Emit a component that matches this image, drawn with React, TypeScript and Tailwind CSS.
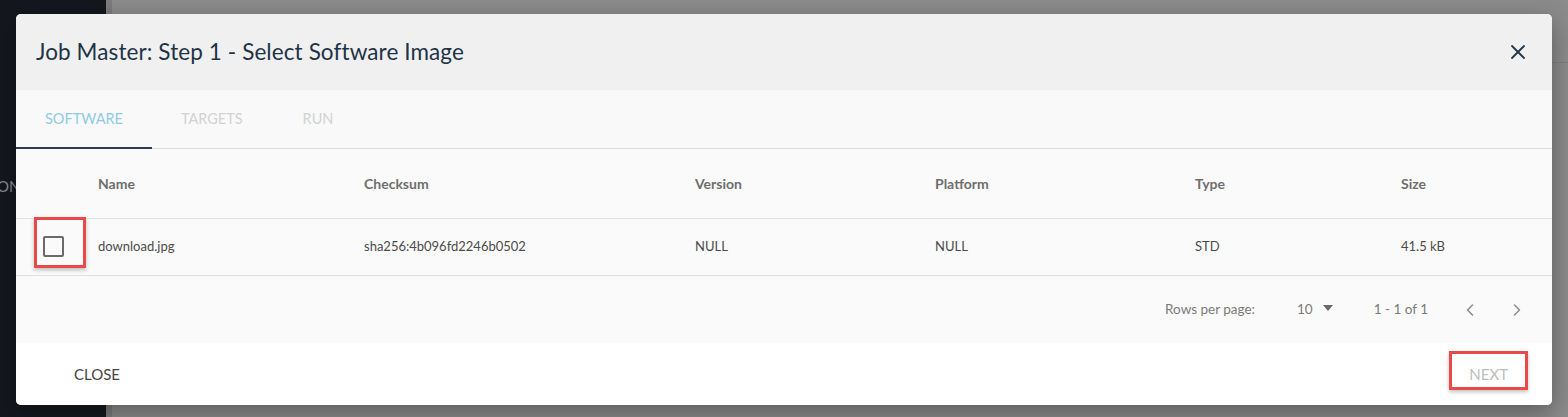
import { X, ChevronLeft, ChevronRight } from "lucide-react";

const columns = [
  { key: "name", label: "Name" },
  { key: "checksum", label: "Checksum" },
  { key: "version", label: "Version" },
  { key: "platform", label: "Platform" },
  { key: "type", label: "Type" },
  { key: "size", label: "Size" },
];

const rows = [
  {
    name: "download.jpg",
    checksum: "sha256:4b096fd2246b0502",
    version: "NULL",
    platform: "NULL",
    type: "STD",
    size: "41.5 kB",
  },
];

const grid = "grid grid-cols-[82px_266px_331px_240px_260px_206px_1fr] items-center";

export default function App() {
  return (
    <div
      className="relative w-[1568px] h-[417px] overflow-hidden bg-[#8b8b8b] flex"
      style={{ fontFamily: "Lato, 'Open Sans', sans-serif" }}
    >
      <div className="w-[106px] h-full bg-[#14181e] relative">
        <span className="absolute left-[-3px] top-[175px] text-[15px] text-[#8a8f96]">ON</span>
      </div>
      <div className="w-[6px] h-full bg-[#7c7c7c]" />
      <div className="flex-1 h-[63px] border-b border-[#7f7f7f]" />

      {/* dialog */}
      <div className="absolute left-[16px] top-[14px] w-[1536px] h-[391px] rounded-[5px] bg-white shadow-[0_8px_24px_rgba(0,0,0,0.35)] overflow-hidden flex flex-col">
        <div className="h-[76px] bg-[#f0f0f0] flex items-center justify-between pl-[20px] pr-[22px]">
          <h1 className="text-[22.5px] text-[#1e3346] tracking-[0.1px]">Job Master: Step 1 - Select Software Image</h1>
          <X size={24} strokeWidth={1.8} className="text-[#22384b]" />
        </div>

        <div className="h-[59px] bg-[#f9f9f9] border-b border-[#dcdcdc] flex">
          <div className="relative px-[29px] flex items-center text-[14.5px] text-[#8fcbe6] uppercase">
            Software
            <div className="absolute left-0 right-0 bottom-[-1px] h-[2px] bg-[#2d3d4d]" />
          </div>
          <div className="px-[29px] flex items-center text-[14.5px] text-[#d2d2d2] uppercase">Targets</div>
          <div className="pl-[31px] pr-[29px] flex items-center text-[14.5px] text-[#d2d2d2] uppercase">Run</div>
        </div>

        <div className="bg-[#fafafa]">
          <div className={`${grid} h-[70px] border-b border-[#e0e0e0] text-[14px] font-bold text-[#6e6e6e]`}>
            <div />
            {columns.map((c) => (
              <div key={c.key}>{c.label}</div>
            ))}
          </div>

          {rows.map((r) => (
            <div key={r.name} className={`${grid} h-[57px] border-b border-[#e0e0e0] text-[13px] text-[#4a4a4a]`}>
              <div className="relative h-full flex items-center">
                <div className="absolute left-[18px] top-[-2px] w-[52px] h-[51px] border-[3px] border-[#e84a4a] shadow-[0_2px_4px_rgba(0,0,0,0.25)]" />
                <div className="ml-[27px] w-[21px] h-[21px] border-2 border-[#6a6a6a] rounded-[2px] mb-[2px]" />
              </div>
              <div>{r.name}</div>
              <div>{r.checksum}</div>
              <div>{r.version}</div>
              <div>{r.platform}</div>
              <div>{r.type}</div>
              <div>{r.size}</div>
            </div>
          ))}

          <div className="h-[67px] flex items-center justify-end text-[13.5px] text-[#7a7a7a] pr-[25px]">
            <span>Rows per page:</span>
            <span className="ml-[42px]">10</span>
            <svg width="12" height="8" viewBox="0 0 12 8" className="ml-[9px] mb-[4px]">
              <path d="M1 1 L11 1 L6 7 Z" fill="#6a6a6a" />
            </svg>
            <span className="ml-[40px]">1 - 1 of 1</span>
            <ChevronLeft size={20} strokeWidth={1.8} className="ml-[32px] text-[#8a8a8a]" />
            <ChevronRight size={20} strokeWidth={1.8} className="ml-[27px] text-[#8a8a8a]" />
          </div>
        </div>

        <div className="flex-1 bg-white flex items-center justify-between pl-[58px] pr-[44px]">
          <span className="text-[15px] text-[#444] uppercase">Close</span>
          <div className="relative">
            <div className="absolute left-[-20px] top-[-11px] w-[79px] h-[39px] border-[3px] border-[#e84a4a] shadow-[0_2px_4px_rgba(0,0,0,0.25)]" />
            <span className="text-[15px] text-[#bdbdbd] uppercase">Next</span>
          </div>
        </div>
      </div>
    </div>
  );
}
